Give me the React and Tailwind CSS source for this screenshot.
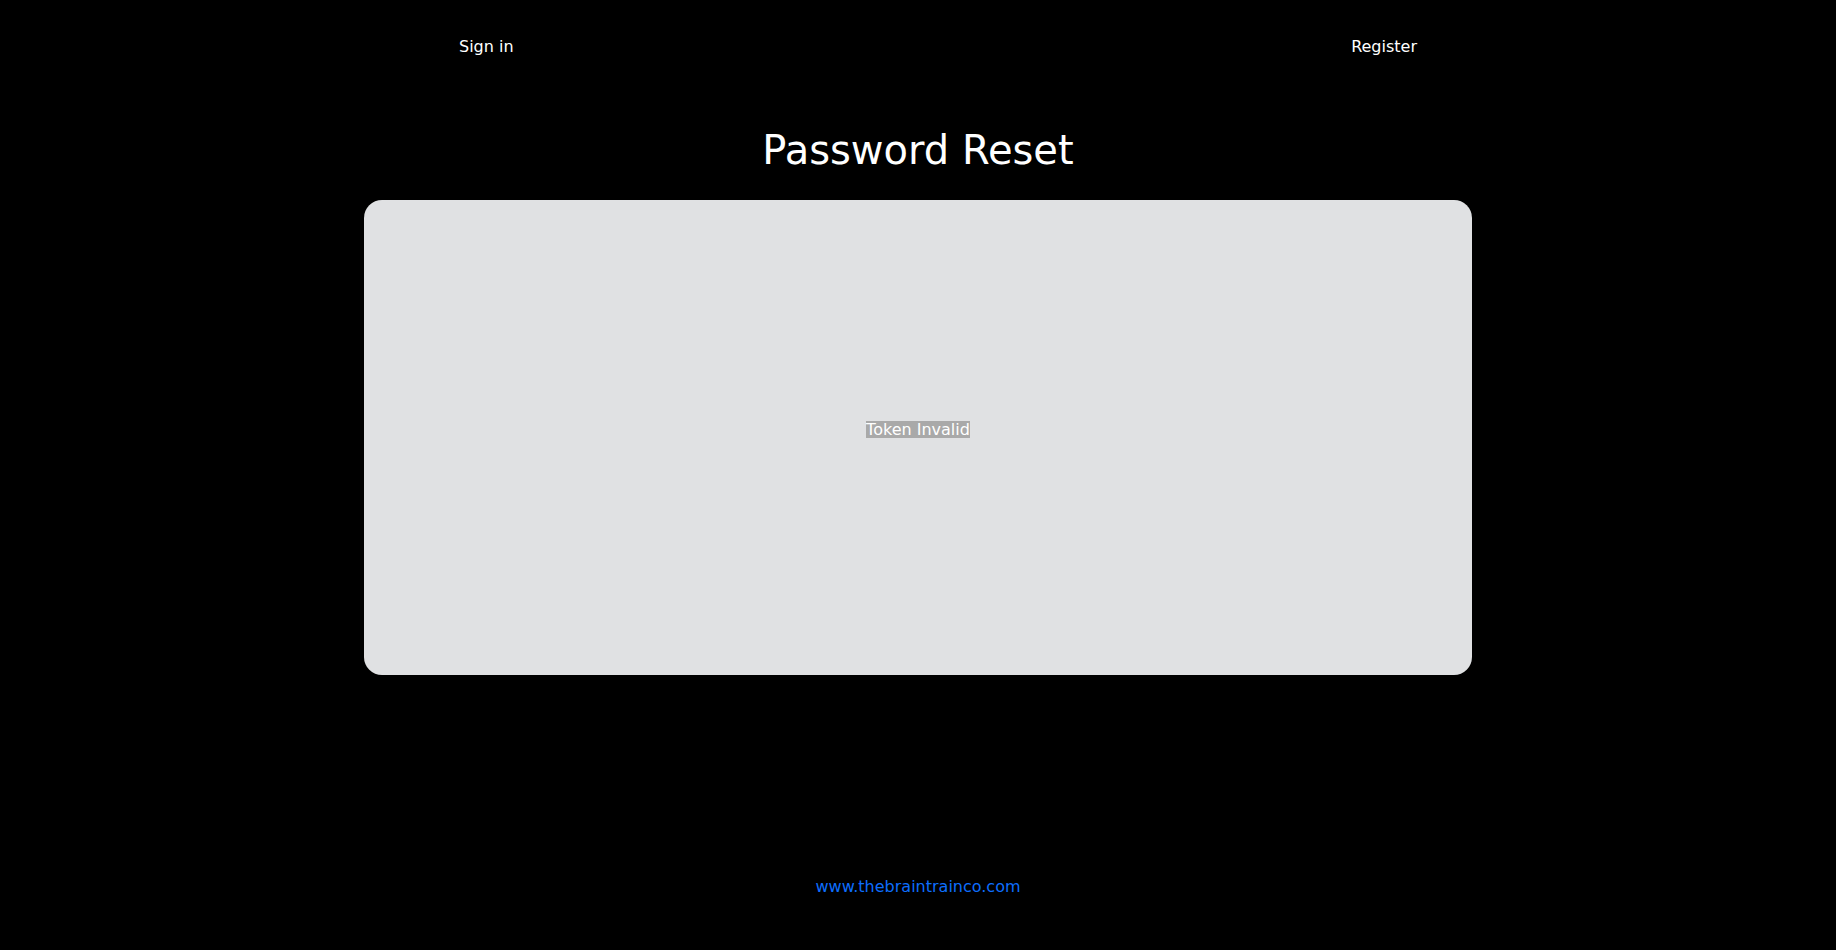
export default function App() {
  return (
    <div className="min-h-screen bg-black text-white flex flex-col" style={{ fontFamily: '"DejaVu Sans", sans-serif' }}>
      {/* Top nav */}
      <div className="w-[1108px] mx-auto flex justify-between pl-[95px] pr-[55px] pt-[35px] text-base leading-6">
        <a className="text-white">Sign in</a>
        <a className="text-white">Register</a>
      </div>

      {/* Title */}
      <h1 className="text-center text-[40px] leading-[48px] mt-[67px]">Password Reset</h1>

      {/* Card */}
      <div className="w-[1108px] h-[475px] mx-auto mt-[26px] rounded-[18px] bg-[#e0e1e3] flex items-center justify-center pb-[16px]">
        <span className="bg-[#a9a9a9] text-white text-base leading-[17px]">Token Invalid</span>
      </div>

      {/* Footer */}
      <div className="text-center mt-[200px] leading-6">
        <a className="text-[#0d6efd]">www.thebraintrainco.com</a>
      </div>
    </div>
  );
}
